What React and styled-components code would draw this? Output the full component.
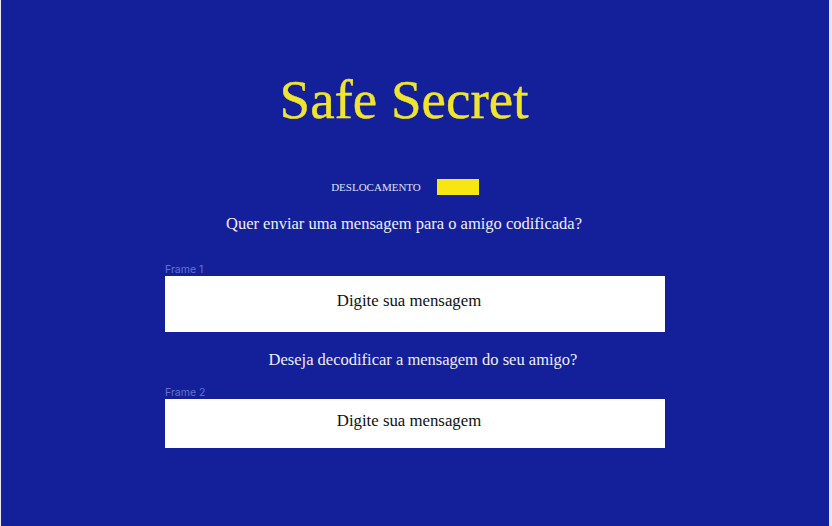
import React from "react";
import styled, { createGlobalStyle } from "styled-components";

const Global = createGlobalStyle`
  html, body { margin: 0; padding: 0; background: #e6e8f6; }
  body { font-family: "Liberation Serif", serif; }
  * { box-sizing: border-box; }
`;

const Frame = styled.main`
  margin-left: 1px;
  width: 828px;
  height: 526px;
  background: #14209a;
  display: flex;
  flex-direction: column;
  align-items: center;
  padding-top: 72px;
`;

const Title = styled.h1`
  margin: 0;
  font-family: "Liberation Serif", serif;
  font-weight: 400;
  font-size: 55px;
  line-height: 55px;
  color: #f0e52c;
  -webkit-text-stroke: 0.4px #f0e52c;
  transform: translateX(-11px);
`;

const OffsetRow = styled.div`
  margin-top: 52px;
  height: 16px;
  display: flex;
  align-items: center;
  gap: 16px;
  transform: translateX(-10px);
`;

const OffsetLabel = styled.label`
  font-family: "Liberation Serif", serif;
  font-size: 11px;
  color: #dfe2f7;
`;

const OffsetInput = styled.input`
  width: 42px;
  height: 16px;
  border: none;
  padding: 0;
  background: #f5e614;
  outline: none;
`;

const Question = styled.p`
  margin: ${(p) => p.$top}px 0 0;
  font-family: "Liberation Serif", serif;
  font-size: 16.5px;
  line-height: 20px;
  color: #eceefa;
  transform: translateX(${(p) => p.$shift || 0}px);
`;

const Section = styled.section`
  width: 500px;
  margin-top: ${(p) => p.$top}px;
  display: flex;
  flex-direction: column;
`;

const FrameLabel = styled.span`
  font-family: Inter, "Noto Sans", sans-serif;
  font-size: 10.5px;
  line-height: 13px;
  color: #6570d2;
`;

const MessageInput = styled.input`
  width: 500px;
  height: ${(p) => p.$h}px;
  border: none;
  background: #ffffff;
  text-align: center;
  font-family: "Liberation Serif", serif;
  font-size: 16.8px;
  color: #111;
  outline: none;
  padding: 0 12px 6px 0;
  &::placeholder { color: #111; opacity: 1; }
`;

export default function App() {
  return (
    <>
      <Global />
      <Frame>
        <Title>Safe Secret</Title>
        <OffsetRow>
          <OffsetLabel>DESLOCAMENTO</OffsetLabel>
          <OffsetInput type="number" aria-label="deslocamento" />
        </OffsetRow>
        <Question $top={19} $shift={-11}>Quer enviar uma mensagem para o amigo codificada?</Question>
        <Section $top={29}>
          <FrameLabel>Frame 1</FrameLabel>
          <MessageInput $h={56} placeholder="Digite sua mensagem" />
        </Section>
        <Question $top={18} $shift={8}>Deseja decodificar a mensagem do seu amigo?</Question>
        <Section $top={16}>
          <FrameLabel>Frame 2</FrameLabel>
          <MessageInput $h={49} placeholder="Digite sua mensagem" />
        </Section>
      </Frame>
    </>
  );
}
